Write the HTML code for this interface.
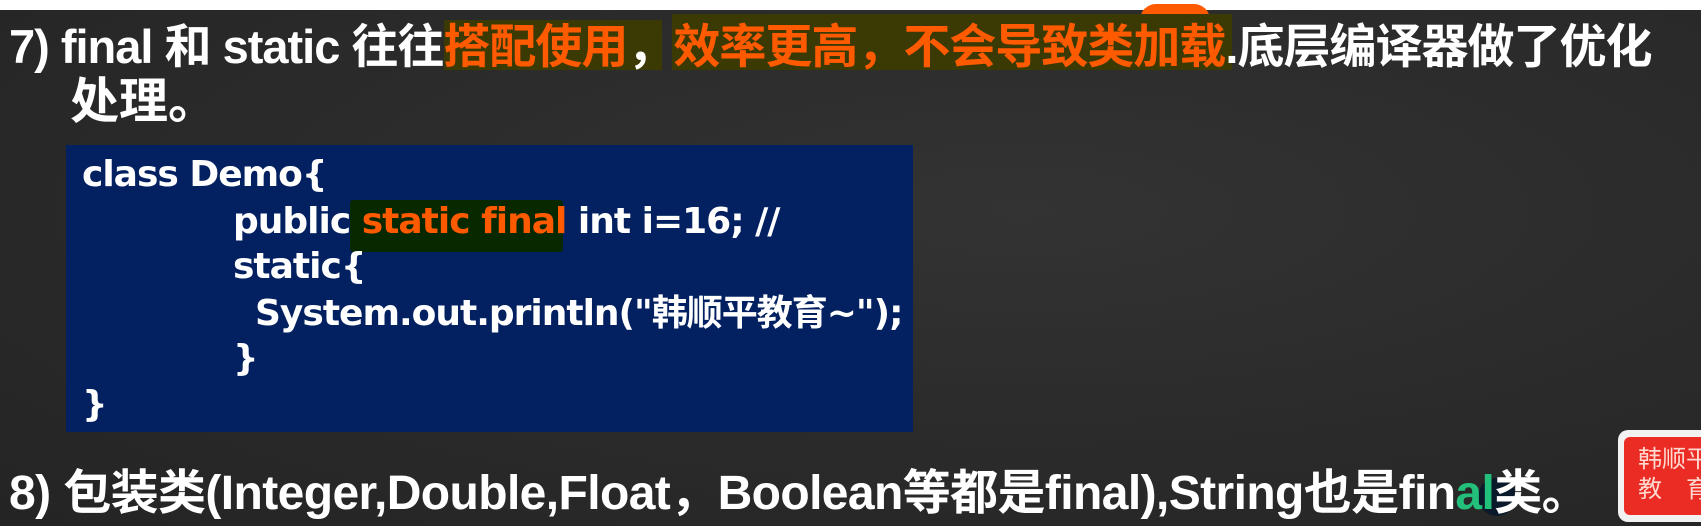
<!DOCTYPE html>
<html><head><meta charset="utf-8"><style>
html,body{margin:0;padding:0}
body{width:1701px;height:526px;overflow:hidden;position:relative;background:#2a2a2a;font-family:"Liberation Sans","Noto Sans CJK SC",sans-serif;font-weight:bold;color:#fff}
.bg{position:absolute;inset:0;background:radial-gradient(ellipse at 60% 40%,#333 0%,#2b2b2b 50%,#242424 100%)}
.top{position:absolute;left:0;top:0;width:1701px;height:10px;background:#fff}
.t{position:absolute;white-space:nowrap;line-height:1}
.hl{position:absolute;background:#3b3a05}
.o{color:#ff5a00}
.code{position:absolute;left:66px;top:145px;width:847px;height:287px;background:#032060}
.c{position:absolute;white-space:nowrap;font-size:36px;line-height:1;font-family:"DejaVu Sans","Noto Sans CJK SC",sans-serif;font-weight:bold;letter-spacing:-1px}
.badge{position:absolute;left:1618px;top:430px;width:100px;height:92px;background:#f2f2f2;border-radius:10px}
.badge div{position:absolute;left:6px;top:7px;right:0;bottom:7px;background:#ea2c24;border-radius:6px;font-weight:normal;font-size:24px;line-height:30px;padding:8px 0 0 14px;color:#ffd9d0}
</style></head><body>
<div class="bg"></div>
<div class="top"></div>
<div style="position:absolute;left:1140px;top:4px;width:70px;height:16px;background:#ff5a00;border-radius:40px 40px 0 0"></div>
<div class="hl" style="left:444px;top:20px;width:218px;height:50px"></div>
<div class="hl" style="left:672px;top:14px;width:560px;height:56px"></div>
<div class="t" style="left:9px;top:23px;font-size:47px;letter-spacing:-1px">7) final 和 static 往往<span class="o">搭配使用</span>，<span class="o">效率更高，不会导致类加载</span>.底层编译器做了优化</div>
<div class="t" style="left:70px;top:78px;font-size:49px">处理。</div>
<div class="code"></div>
<div style="position:absolute;left:350px;top:200px;width:213px;height:52px;background:#082800;border-radius:3px"></div>
<div class="c" style="left:82px;top:157px">class Demo{</div>
<div class="c" style="left:233px;top:204px">public <span class="o">static final</span> int i=16; //</div>
<div class="c" style="left:233px;top:249px">static{</div>
<div class="c" style="left:255px;top:296px">System.out.println("韩顺平教育~");</div>
<div class="c" style="left:233px;top:341px">}</div>
<div class="c" style="left:82px;top:387px">}</div>
<div style="position:absolute;left:1478px;top:478px;width:38px;height:38px;border-radius:50%;background:#0a1a2a"></div>
<div class="t" style="left:9px;top:470px;font-size:48px;letter-spacing:-0.6px">8) 包装类(Integer,Double,Float，Boolean等都是final),String也是fin<span style="color:#22c07a">al</span>类。</div>
<div class="badge"><div>韩顺平<br>教　育</div></div>
</body></html>
